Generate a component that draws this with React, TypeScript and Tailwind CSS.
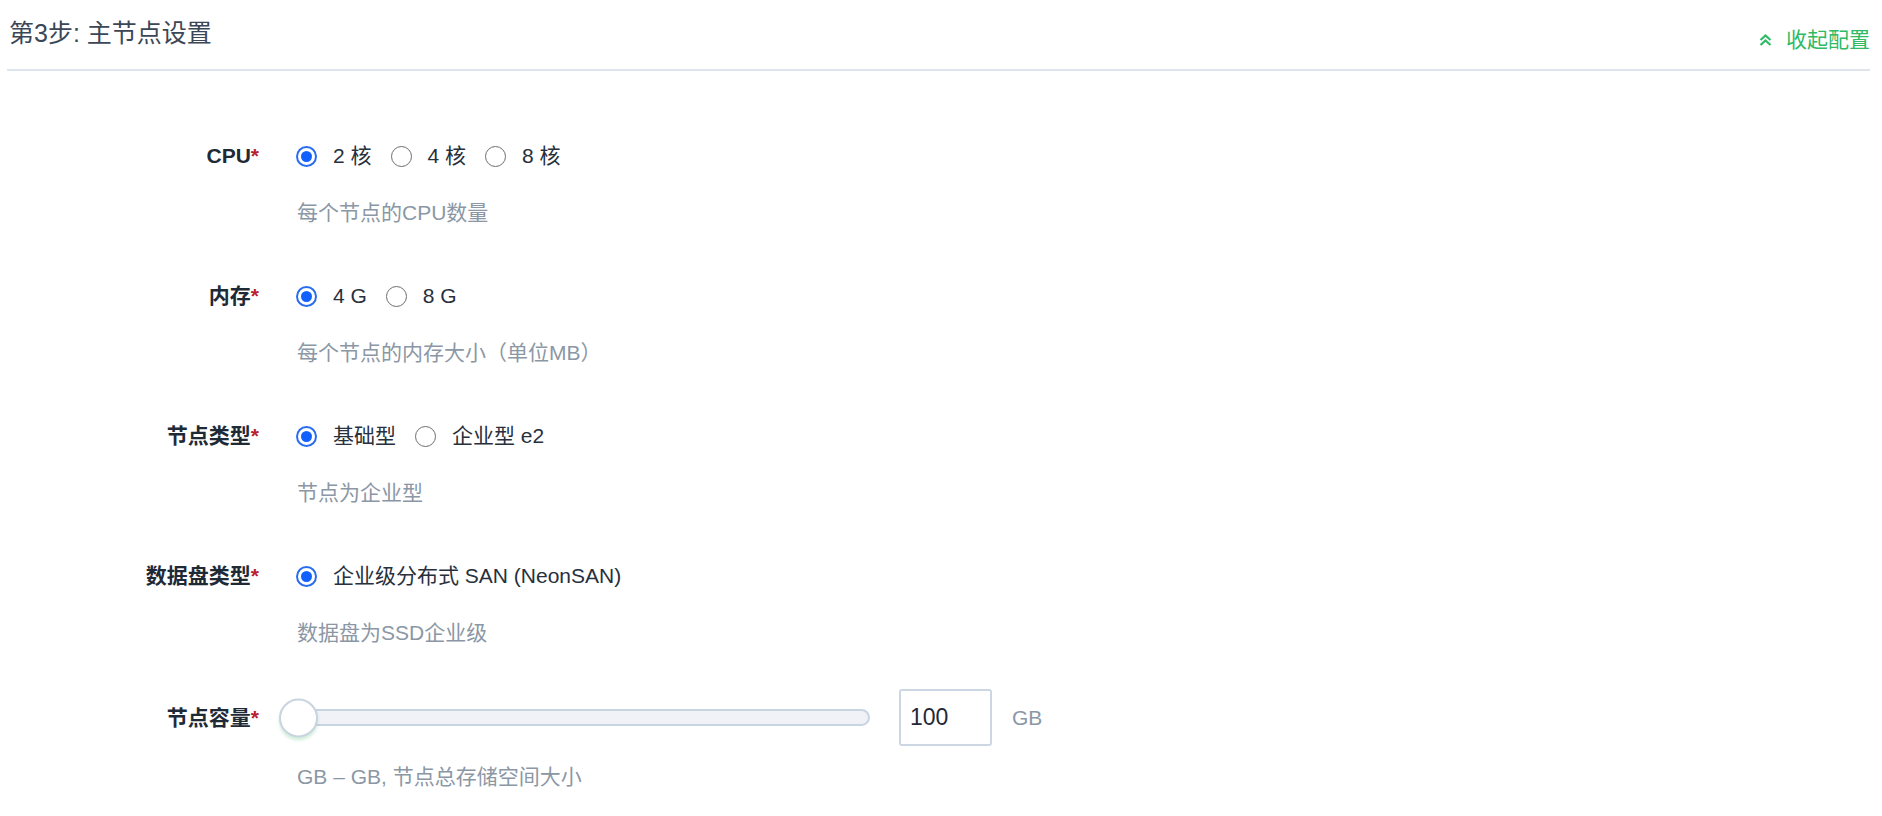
import React from "react";

type Option = { label: string; checked?: boolean };

const rows: { label: string; options: Option[]; hint: string }[] = [
  {
    label: "CPU",
    options: [{ label: "2 核", checked: true }, { label: "4 核" }, { label: "8 核" }],
    hint: "每个节点的CPU数量",
  },
  {
    label: "内存",
    options: [{ label: "4 G", checked: true }, { label: "8 G" }],
    hint: "每个节点的内存大小（单位MB）",
  },
  {
    label: "节点类型",
    options: [{ label: "基础型", checked: true }, { label: "企业型 e2" }],
    hint: "节点为企业型",
  },
  {
    label: "数据盘类型",
    options: [{ label: "企业级分布式 SAN (NeonSAN)", checked: true }],
    hint: "数据盘为SSD企业级",
  },
];

function Radio({ checked }: { checked?: boolean }) {
  if (checked) {
    return (
      <span className="flex h-[21px] w-[21px] shrink-0 items-center justify-center rounded-full border-2 border-[#2a6cf0] bg-white">
        <span className="h-[11px] w-[11px] rounded-full bg-[#1261ff]" />
      </span>
    );
  }
  return <span className="h-[21px] w-[21px] shrink-0 rounded-full border-[1.5px] border-[#6e6e6e] bg-white" />;
}

function Label({ text }: { text: string }) {
  return (
    <div className="w-[252px] shrink-0 text-right text-[21px] font-semibold leading-[30px] text-[#1f2a37]">
      {text}
      <span className="text-[#b8232a]">*</span>
    </div>
  );
}

function Hint({ text }: { text: string }) {
  return <div className="mt-[27px] pl-[290px] text-[21px] leading-[30px] text-[#8b97a5]">{text}</div>;
}

export default function App() {
  return (
    <div
      className="min-h-screen bg-white pl-[7px] pr-[12px]"
      style={{ fontFamily: '"Liberation Sans", "Noto Sans CJK SC", sans-serif' }}
    >
      <div className="flex h-[71px] justify-between border-b-2 border-[#dde4ec]">
        <div className="pl-[2px] pt-[18px] text-[25px] leading-[30px] text-[#3b4756]">第3步: 主节点设置</div>
        <button className="mb-[14px] flex items-center gap-[14px] self-end text-[21px] leading-[30px] text-[#2fba66]">
          <svg width="13" height="12" viewBox="0 0 13 12" fill="none" stroke="currentColor" strokeWidth="2.2">
            <path d="M1.5 6 6.5 1.5l5 4.5" />
            <path d="M1.5 11 6.5 6.5l5 4.5" />
          </svg>
          收起配置
        </button>
      </div>

      <div className="pt-[70px]">
        {rows.map((row) => (
          <div key={row.label} className="mb-[53px]">
            <div className="flex items-center">
              <Label text={row.label} />
              <div className="ml-[37px] flex items-center">
                {row.options.map((opt, i) => (
                  <label
                    key={opt.label}
                    className={`flex items-center gap-[16px] text-[21px] leading-[30px] text-[#27303c] ${i > 0 ? "ml-[19px]" : ""}`}
                  >
                    <Radio checked={opt.checked} />
                    {opt.label}
                  </label>
                ))}
              </div>
            </div>
            <Hint text={row.hint} />
          </div>
        ))}

        <div className="-mt-[12px]">
          <div className="flex h-[57px] items-center">
            <Label text="节点容量" />
            <div className="relative ml-[37px] h-[17px] w-[574px] rounded-full border-2 border-[#c9d4e1] bg-[#f0f2f8]">
              <span className="absolute -left-[19px] top-1/2 h-[39px] w-[39px] -translate-y-1/2 rounded-full border-2 border-[#c9d4e1] bg-white shadow-[0_3px_3px_rgba(80,190,120,0.25)]" />
            </div>
            <div className="ml-[29px] flex h-[57px] w-[93px] items-center rounded-[3px] border-2 border-[#cdd6e3] pl-[9px] text-[23px] text-[#1f2937]">
              100
            </div>
            <span className="ml-[20px] text-[21px] leading-[30px] text-[#8b97a5]">GB</span>
          </div>
          <div className="mt-[16px] pl-[290px] text-[21px] leading-[30px] text-[#8b97a5]">GB – GB, 节点总存储空间大小</div>
        </div>
      </div>
    </div>
  );
}
